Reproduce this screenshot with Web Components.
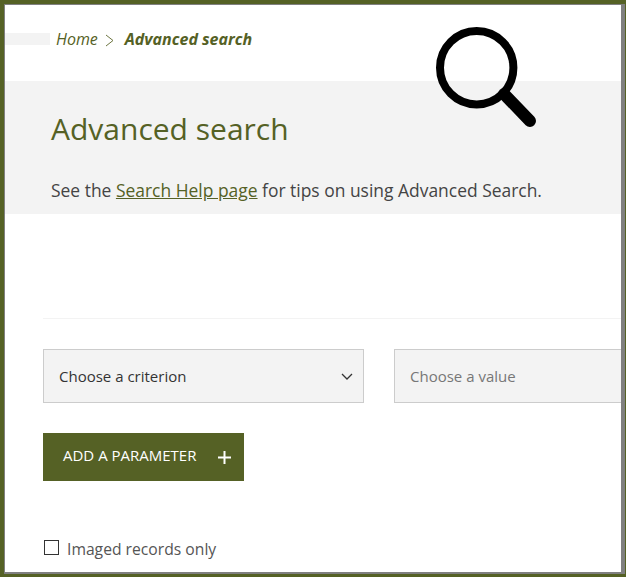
<!DOCTYPE html>
<html>
<head>
<meta charset="utf-8">
<style>
  html, body { margin: 0; padding: 0; height: 100%; overflow: hidden; background: #fff; }
  body { font-family: "Open Sans", sans-serif; }
</style>
</head>
<body>
<search-page>
  <bread-crumbs slot="crumbs" home="Home" current="Advanced search"></bread-crumbs>
  <search-hero slot="hero" heading="Advanced search">See the <a href="#">Search Help page</a> for tips on using Advanced Search.</search-hero>
  <search-form slot="form"></search-form>
</search-page>

<script>
class SearchPage extends HTMLElement {
  constructor() {
    super();
    this.attachShadow({ mode: 'open' });
    this.shadowRoot.innerHTML = `
      <style>
        :host {
          display: block;
          box-sizing: border-box;
          width: 626px;
          height: 577px;
          position: relative;
          overflow: hidden;
          border-style: solid;
          border-color: #556125;
          border-width: 4px 1px 3px 4px;
        }
        .inner {
          box-sizing: border-box;
          height: 100%;
          overflow: hidden;
          border-style: solid;
          border-color: #808080;
          border-width: 1px 4px 2px 1px;
          background: #fff;
        }
        .lens {
          position: absolute;
          left: 431px;
          top: 23px;
        }
      </style>
      <div class="inner">
        <slot name="crumbs"></slot>
        <slot name="hero"></slot>
        <slot name="form"></slot>
      </div>
      <svg class="lens" width="104" height="104" viewBox="0 0 104 104" fill="none" stroke="#000">
        <circle cx="41.7" cy="40.7" r="36.7" stroke-width="8"/>
        <path d="M69 67 L95 94" stroke-width="12" stroke-linecap="round"/>
      </svg>
    `;
  }
}

class BreadCrumbs extends HTMLElement {
  constructor() {
    super();
    this.attachShadow({ mode: 'open' });
  }

  connectedCallback() {
    this.shadowRoot.innerHTML = `
      <style>
        :host {
          display: flex;
          align-items: center;
          height: 68px;
          margin-bottom: 8px;
          font-size: 16px;
          font-style: italic;
          color: #556125;
        }
        .strip { width: 45px; height: 12px; background: #f3f3f3; margin-right: 6px; }
        .sep { margin: 2px 11px 0 7px; display: block; }
        b { font-weight: 700; }
      </style>
      <span class="strip"></span>
      <span>${this.getAttribute('home')}</span>
      <svg class="sep" width="9" height="13" viewBox="0 0 9 13" fill="none" stroke="#6d7540" stroke-width="1"><path d="M1 1l7 5.500-7 5.500"/></svg>
      <b>${this.getAttribute('current')}</b>
    `;
  }
}

class SearchHero extends HTMLElement {
  constructor() {
    super();
    this.attachShadow({ mode: 'open' });
  }

  connectedCallback() {
    this.shadowRoot.innerHTML = `
      <style>
        :host {
          display: block;
          box-sizing: border-box;
          height: 133px;
          padding: 26px 0 0 46px;
          background: #f3f3f3;
          white-space: nowrap;
        }
        h1 {
          margin: 0 0 27px;
          font-size: 30px;
          line-height: 44px;
          font-weight: 400;
          color: #556125;
        }
        p { margin: 0; font-size: 17.45px; line-height: 24px; color: #444; }
        ::slotted(a) { color: #556125; }
      </style>
      <h1>${this.getAttribute('heading')}</h1>
      <p><slot></slot></p>
    `;
  }
}

class SelectBox extends HTMLElement {
  constructor() {
    super();
    this.attachShadow({ mode: 'open' });
  }

  connectedCallback() {
    const chevron = this.hasAttribute('chevron')
      ? `<svg width="12" height="7" viewBox="0 0 12 7" fill="none" stroke="#333" stroke-width="1.300"><path d="M1 1l5 5 5-5"/></svg>`
      : '';
    this.shadowRoot.innerHTML = `
      <style>
        :host {
          display: flex;
          flex: none;
          box-sizing: border-box;
          align-items: center;
          justify-content: space-between;
          height: 54px;
          padding: 0 10px 0 15px;
          background: #f3f3f3;
          border: 1px solid #ccc;
          font-size: 15px;
          color: #333;
        }
        :host([muted]) { color: #777; }
      </style>
      <span><slot></slot></span>${chevron}
    `;
  }
}

class AddButton extends HTMLElement {
  constructor() {
    super();
    this.attachShadow({ mode: 'open' });
    this.shadowRoot.innerHTML = `
      <style>
        :host {
          display: inline-flex;
          box-sizing: border-box;
          align-items: center;
          justify-content: space-between;
          width: 201px;
          height: 48px;
          padding: 0 13px 0 20px;
          background: #556125;
          color: #fff;
          font-size: 15px;
          font-weight: 500;
        }
        span { position: relative; top: -2px; }
      </style>
      <span><slot></slot></span>
      <svg width="13" height="13" viewBox="0 0 13 13" stroke="#fff" stroke-width="2"><path d="M6.500 0v13M0 6.500h13"/></svg>
    `;
  }
}

class SearchForm extends HTMLElement {
  constructor() {
    super();
    this.attachShadow({ mode: 'open' });
    this.shadowRoot.innerHTML = `
      <style>
        :host { display: block; padding: 104px 0 0 38px; }
        hr { margin: 0 0 30px; border: 0; border-top: 1px solid #f3f3f3; }
        .row { display: flex; gap: 30px; margin-bottom: 30px; }
        select-box:first-child { width: 321px; }
        select-box:last-child { width: 300px; }
        .check { display: flex; align-items: center; margin: 57px 0 0 1px; font-size: 15.7px; color: #555; }
        .box { width: 13px; height: 13px; border: 1px solid #333; margin-right: 8px; position: relative; top: -2px; }
      </style>
      <hr>
      <div class="row">
        <select-box chevron>Choose a criterion</select-box>
        <select-box muted>Choose a value</select-box>
      </div>
      <add-button>ADD A PARAMETER</add-button>
      <label class="check"><span class="box"></span>Imaged records only</label>
    `;
  }
}

customElements.define('search-page', SearchPage);
customElements.define('bread-crumbs', BreadCrumbs);
customElements.define('search-hero', SearchHero);
customElements.define('select-box', SelectBox);
customElements.define('add-button', AddButton);
customElements.define('search-form', SearchForm);
</script>
</body>
</html>
